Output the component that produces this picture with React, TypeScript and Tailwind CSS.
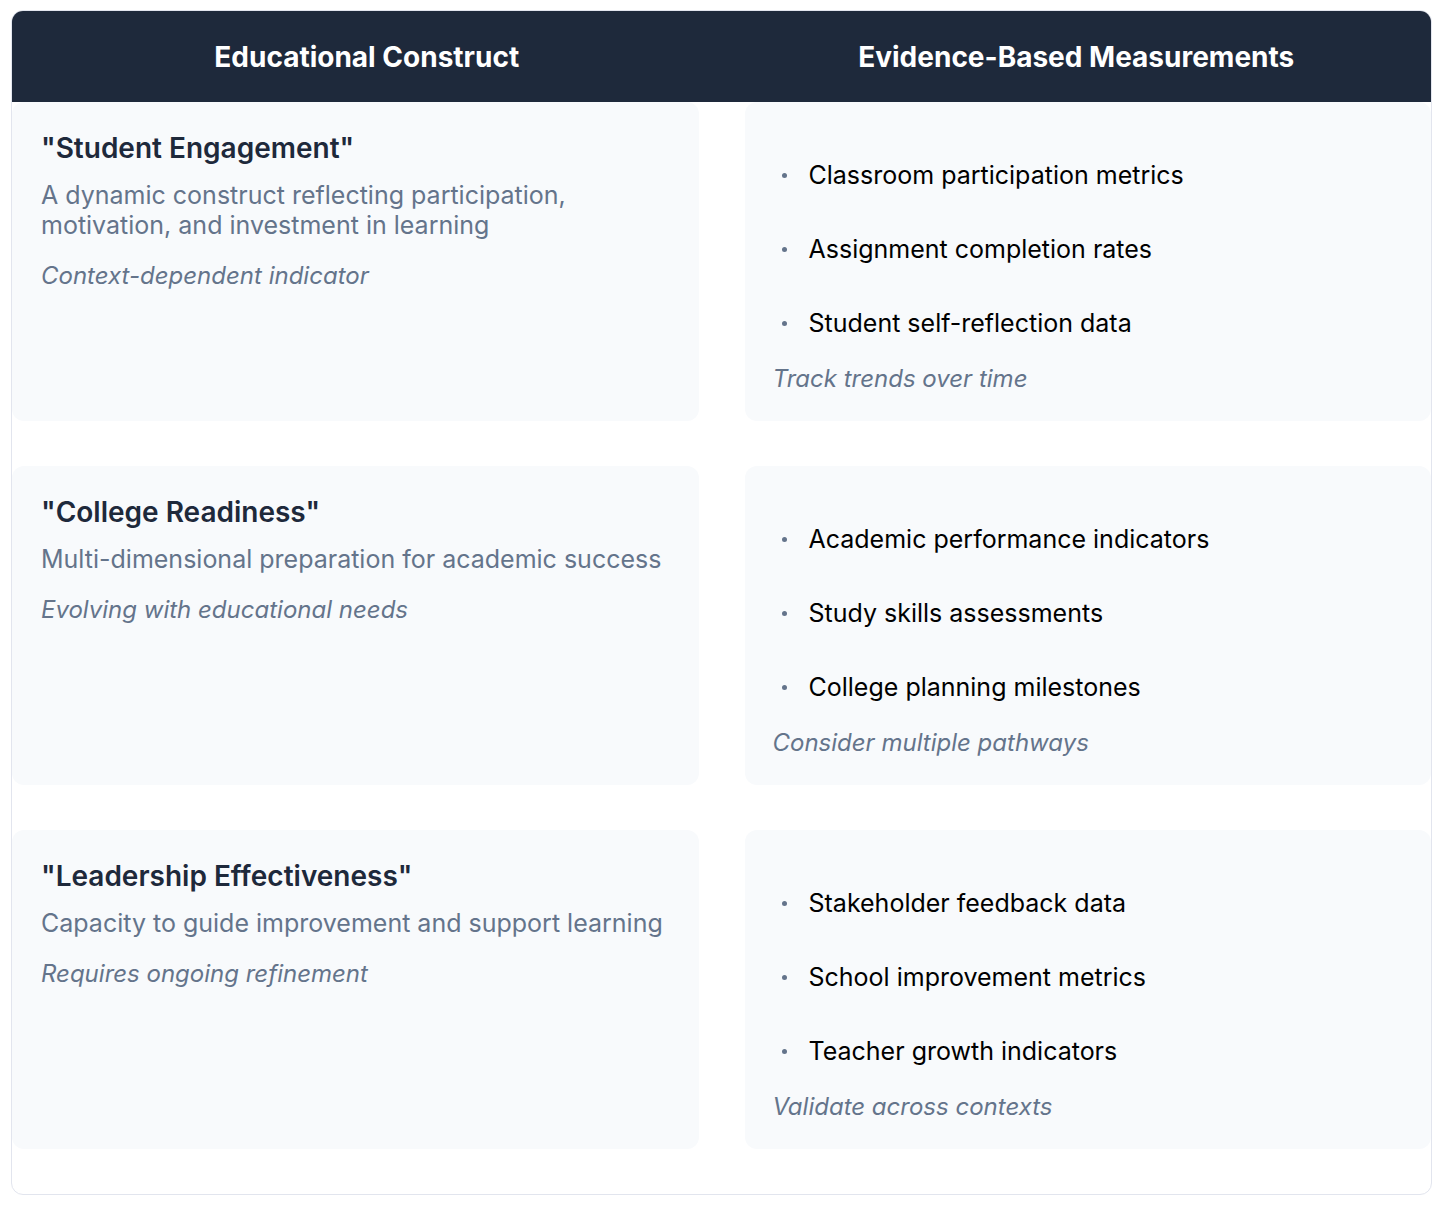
import React from 'react';

interface Row {
  title: string;
  description: string;
  note: string;
  measures: string[];
  tip: string;
}

const rows: Row[] = [
  {
    title: '"Student Engagement"',
    description: 'A dynamic construct reflecting participation, motivation, and investment in learning',
    note: 'Context-dependent indicator',
    measures: ['Classroom participation metrics', 'Assignment completion rates', 'Student self-reflection data'],
    tip: 'Track trends over time',
  },
  {
    title: '"College Readiness"',
    description: 'Multi-dimensional preparation for academic success',
    note: 'Evolving with educational needs',
    measures: ['Academic performance indicators', 'Study skills assessments', 'College planning milestones'],
    tip: 'Consider multiple pathways',
  },
  {
    title: '"Leadership Effectiveness"',
    description: 'Capacity to guide improvement and support learning',
    note: 'Requires ongoing refinement',
    measures: ['Stakeholder feedback data', 'School improvement metrics', 'Teacher growth indicators'],
    tip: 'Validate across contexts',
  },
];

const App: React.FC = () => {
  return (
    <div className="min-h-screen bg-white pt-[10px] pl-[11px]" style={{ fontFamily: 'Inter, "Noto Sans", sans-serif' }}>
      <div className="w-[1421px] border border-[#e2e5ee] rounded-xl overflow-hidden">
        <div className="grid grid-cols-2 bg-[#1e293b] text-white h-[91px] items-center">
          <div className="text-center text-[28px] font-bold">Educational Construct</div>
          <div className="text-center text-[28px] font-bold">Evidence-Based Measurements</div>
        </div>

        <div className="grid grid-cols-2 gap-x-[46px] gap-y-[45px] pb-[45px]">
          {rows.map((row) => (
            <React.Fragment key={row.title}>
              <div className="bg-[#f8fafc] rounded-xl px-[29px] pt-[30px]">
                <h3 className="text-[28px] leading-[32px] font-semibold text-[#1e293b]">{row.title}</h3>
                <p className="mt-4 text-[25px] leading-[30px] text-[#64748b]">{row.description}</p>
                <p className="mt-[21px] text-[24px] leading-[30px] italic text-[#64748b]">{row.note}</p>
              </div>
              <div className="bg-[#f8fafc] rounded-xl pl-[28px] pr-[29px] pt-[36px] pb-[27px]">
                <ul>
                  {row.measures.map((m) => (
                    <li key={m} className="flex items-center py-[22px] text-[25px] leading-[30px] text-black">
                      <span className="ml-[9px] mr-[22px] w-[5px] h-[5px] rounded-full bg-[#64748b] shrink-0" />
                      {m}
                    </li>
                  ))}
                </ul>
                <p className="mt-[4px] text-[24px] leading-[30px] italic text-[#64748b]">{row.tip}</p>
              </div>
            </React.Fragment>
          ))}
        </div>
      </div>
    </div>
  );
};

export default App;
